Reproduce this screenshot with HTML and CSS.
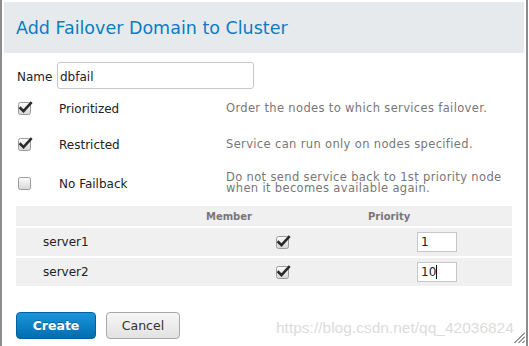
FILE: index.html
```html
<!DOCTYPE html>
<html>
<head>
<meta charset="utf-8">
<link rel="stylesheet" href="styles.css">
</head>
<body>
<div class="dialog">
  <div class="header"><h1 class="title">Add Failover Domain to Cluster</h1></div>
  <div class="content">
    <div class="name-row">
      <label class="name-label">Name</label>
      <input class="text-input" type="text" value="dbfail">
    </div>
    <div class="options">
      <div class="opt">
        <span class="cb-cell"><svg class="cb" width="15" height="14" viewBox="0 0 15 14"><defs><linearGradient id="g1" x1="0" y1="0" x2="0" y2="1"><stop offset="0" stop-color="#fdfdfd"/><stop offset="1" stop-color="#d6d6d6"/></linearGradient></defs><rect x="0.5" y="1.5" width="12" height="12" rx="2" fill="url(#g1)" stroke="#9a9a9a"/><path d="M2.5 7.2 L5.5 10.2 L12.8 2.2" fill="none" stroke="#2b2b2b" stroke-width="2.6" stroke-linecap="square"/></svg></span>
        <span class="opt-label">Prioritized</span>
        <span class="desc">Order the nodes to which services failover.</span>
      </div>
      <div class="opt">
        <span class="cb-cell"><svg class="cb" width="15" height="14" viewBox="0 0 15 14"><rect x="0.5" y="1.5" width="12" height="12" rx="2" fill="url(#g1)" stroke="#9a9a9a"/><path d="M2.5 7.2 L5.5 10.2 L12.8 2.2" fill="none" stroke="#2b2b2b" stroke-width="2.6" stroke-linecap="square"/></svg></span>
        <span class="opt-label">Restricted</span>
        <span class="desc">Service can run only on nodes specified.</span>
      </div>
      <div class="opt">
        <span class="cb-cell"><svg class="cb" width="15" height="14" viewBox="0 0 15 14"><rect x="0.5" y="1.5" width="12" height="12" rx="2" fill="url(#g1)" stroke="#9a9a9a"/></svg></span>
        <span class="opt-label">No Failback</span>
        <span class="desc">Do not send service back to 1st priority node<br>when it becomes available again.</span>
      </div>
    </div>
    <div class="table">
      <div class="trow thead">
        <span class="th-member">Member</span>
        <span></span>
        <span class="th-priority">Priority</span>
      </div>
      <div class="trow">
        <span class="node">server1</span>
        <span class="cb-member"><svg class="cb" width="15" height="14" viewBox="0 0 15 14"><rect x="0.5" y="1.5" width="12" height="12" rx="2" fill="url(#g1)" stroke="#9a9a9a"/><path d="M2.5 7.2 L5.5 10.2 L12.8 2.2" fill="none" stroke="#2b2b2b" stroke-width="2.6" stroke-linecap="square"/></svg></span>
        <span class="prio"><span class="prio-input">1</span></span>
      </div>
      <div class="trow">
        <span class="node">server2</span>
        <span class="cb-member"><svg class="cb" width="15" height="14" viewBox="0 0 15 14"><rect x="0.5" y="1.5" width="12" height="12" rx="2" fill="url(#g1)" stroke="#9a9a9a"/><path d="M2.5 7.2 L5.5 10.2 L12.8 2.2" fill="none" stroke="#2b2b2b" stroke-width="2.6" stroke-linecap="square"/></svg></span>
        <span class="prio"><span class="prio-input">10<span class="caret"></span></span></span>
      </div>
    </div>
    <div class="actions">
      <button class="btn btn-primary">Create</button>
      <button class="btn btn-default">Cancel</button>
    </div>
  </div>
  <div class="watermark">https://blog.csdn.net/qq_42036824</div>
  <svg class="grip" width="11" height="11" viewBox="0 0 11 11"><path d="M0.5 11 L11 0.5 M4.5 11 L11 4.5 M8.5 11 L11 8.5" stroke="#333" stroke-width="1"/></svg>
</div>
</body>
</html>
```
FILE: styles.css
```css
html, body {
  margin: 0;
  padding: 0;
  background: #ffffff;
}
body {
  font-family: "DejaVu Sans", sans-serif;
  color: #222;
}
.dialog {
  position: relative;
  box-sizing: border-box;
  width: 528px;
  height: 346px;
  border-left: 2px solid #8c8c8c;
  border-right: 2px solid #8c8c8c;
  padding: 2px 2px 0;
  background: #fff;
  overflow: hidden;
}
.header {
  height: 51px;
  background: #e7eaed;
  display: flex;
  align-items: center;
  padding-left: 12px;
}
.title {
  margin: 0;
  font-size: 17.5px;
  font-weight: normal;
  line-height: 20px;
  color: #0a7cc1;
}
.content {
  padding: 0 12px;
}
.name-row {
  display: flex;
  align-items: center;
  height: 27px;
  margin-top: 9px;
}
.name-label {
  font-size: 12px;
  line-height: 14px;
  padding-top: 2px;
  margin-left: 1px;
  width: 40px;
  color: #222;
}
.text-input {
  box-sizing: border-box;
  width: 197px;
  height: 27px;
  border: 1px solid #c6c6c6;
  border-radius: 3px;
  padding: 3px 2px 0;
  margin: 0;
  font-family: "DejaVu Sans", sans-serif;
  font-size: 12px;
  color: #222;
  outline: none;
}
.options {
  margin-top: 11px;
  display: flex;
  flex-direction: column;
  gap: 20px;
}
.opt {
  display: grid;
  grid-template-columns: 43px 167px 1fr;
  align-items: center;
}
.cb-cell {
  display: flex;
  padding-left: 2px;
}
.cb {
  display: block;
}
.opt-label {
  font-size: 12px;
  line-height: 14px;
  padding-top: 2px;
  color: #222;
}
.desc {
  font-size: 11.5px;
  letter-spacing: 0.35px;
  line-height: 11px;
  color: #777;
}
.table {
  margin-top: 12px;
  display: flex;
  flex-direction: column;
  gap: 2px;
}
.trow {
  display: grid;
  grid-template-columns: 238px 102px 1fr;
  align-items: center;
  height: 28px;
  background: #f0f0f0;
}
.thead {
  height: 20px;
  font-size: 10px;
  font-weight: bold;
  color: #777;
}
.th-member {
  text-align: right;
  padding-right: 2px;
}
.th-priority {
  padding-left: 12px;
}
.node {
  padding-left: 27px;
  font-size: 12px;
  color: #222;
}
.cb-member {
  display: flex;
  padding-left: 22px;
}
.prio {
  display: flex;
  padding-left: 61px;
}
.prio-input {
  box-sizing: border-box;
  width: 40px;
  height: 20px;
  border: 1px solid #c6c6c6;
  background: #fff;
  font-size: 12px;
  line-height: 18px;
  padding-left: 3px;
  color: #222;
  display: flex;
  align-items: center;
}
.caret {
  display: inline-block;
  width: 1px;
  height: 14px;
  background: #111;
}
.actions {
  margin-top: 26px;
  display: flex;
  gap: 10px;
}
.btn {
  box-sizing: border-box;
  height: 27px;
  border-radius: 4px;
  font-family: "DejaVu Sans", sans-serif;
  font-size: 12.5px;
  padding: 0;
  margin: 0;
}
.btn-primary {
  width: 80px;
  font-weight: bold;
  color: #fff;
  border: 1px solid #0060a0;
  background: linear-gradient(to bottom, #1b95da, #006db0);
  text-shadow: 0 -1px 0 rgba(0,0,0,0.25);
}
.btn-default {
  width: 74px;
  color: #333;
  border: 1px solid #a8a8a8;
  background: linear-gradient(to bottom, #f6f6f6, #e2e2e2);
}
.watermark {
  position: absolute;
  left: 274px;
  top: 320px;
  font-family: "Liberation Sans", Arial, sans-serif;
  font-size: 15.5px;
  line-height: 15.5px;
  color: #dcdcdc;
  white-space: nowrap;
}
.grip {
  position: absolute;
  right: 1px;
  bottom: 3px;
}
```
